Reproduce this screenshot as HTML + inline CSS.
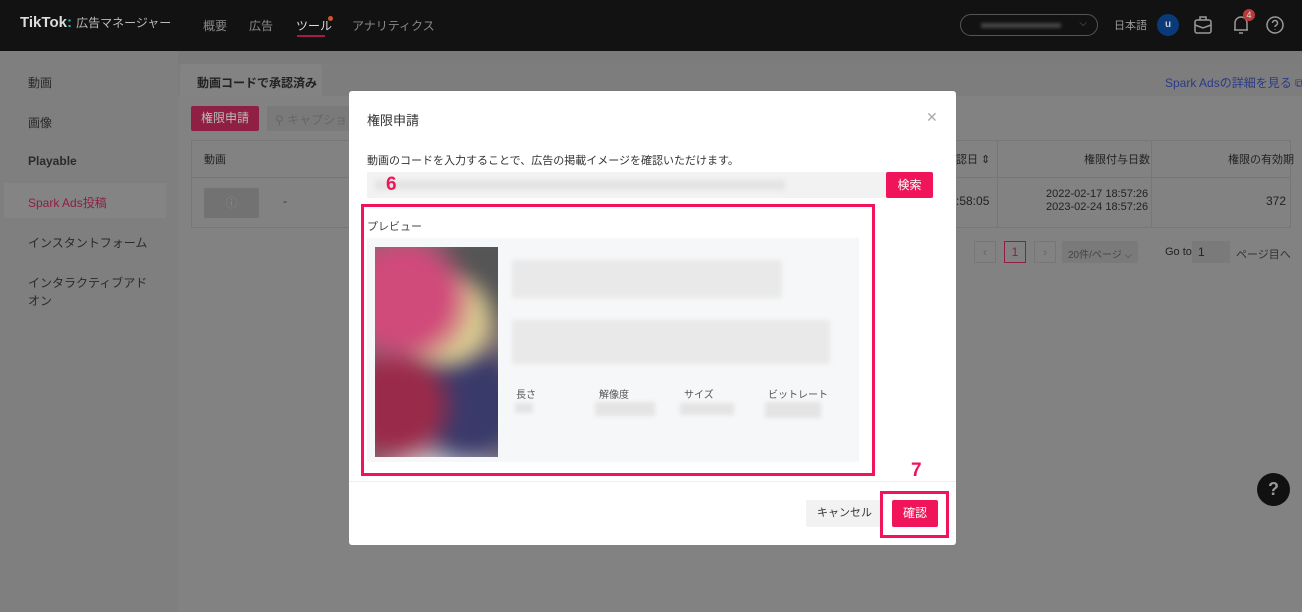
<!DOCTYPE html>
<html><head><meta charset="utf-8"><style>
*{box-sizing:border-box;margin:0;padding:0}
body{width:1302px;height:612px;overflow:hidden;font-family:"Liberation Sans","Noto Sans CJK JP",sans-serif;background:#7b7b7b;position:relative;font-size:12px;color:#222}
.a{position:absolute;white-space:nowrap}
.top{left:0;top:0;width:1302px;height:51px;background:#121212}
.nav{color:#888;font-size:12px}
.side{left:0;top:51px;width:178px;height:561px;background:#7f7f7f}
.si{left:28px;font-size:12px;color:#2a2a2a}
.modal{left:349px;top:91px;width:607px;height:454px;background:#fff;border-radius:3px}
.gray{background:#e4e4e4;filter:blur(2px)}
</style></head><body>
<div class="a top"></div>
<div class="a" style="left:20px;top:14px;color:#ddd;font-weight:bold;font-size:15px">TikTok<span style="color:#2bb">:</span> <span style="font-weight:normal;font-size:12px;color:#bbb">広告マネージャー</span></div>
<div class="a nav" style="left:203px;top:17px">概要</div>
<div class="a nav" style="left:249px;top:17px">広告</div>
<div class="a nav" style="left:296px;top:17px;color:#ddd">ツール</div>
<div class="a" style="left:328px;top:16px;width:5px;height:5px;border-radius:50%;background:#d2532a"></div>
<div class="a" style="left:297px;top:35px;width:28px;height:2px;background:#a01e45"></div>
<div class="a nav" style="left:352px;top:17px">アナリティクス</div>
<div class="a" style="left:960px;top:14px;width:138px;height:22px;border:1px solid #555;border-radius:11px"><div class="a" style="left:20px;top:8px;width:80px;height:5px;background:#444;filter:blur(1.5px)"></div><span class="a" style="right:10px;top:3px;color:#666;font-size:10px">⌵</span></div>
<div class="a" style="left:1114px;top:17px;color:#999;font-size:11px">日本語</div>
<div class="a" style="left:1157px;top:14px;width:22px;height:22px;border-radius:50%;background:#0b3a7a;color:#ccc;font-size:10px;text-align:center;line-height:22px;font-weight:bold">u</div>
<svg class="a" style="left:1193px;top:14px" width="20" height="22" viewBox="0 0 20 22" fill="none" stroke="#999" stroke-width="1.5"><rect x="2" y="6" width="16" height="13" rx="2"/><path d="M7 6V3h6v3M2 11l8 3 8-3"/></svg>
<svg class="a" style="left:1231px;top:12px" width="20" height="24" viewBox="0 0 20 24" fill="none" stroke="#999" stroke-width="1.5"><path d="M4 18V11a6 6 0 0 1 12 0v7H3h14M8 21h4"/></svg>
<div class="a" style="left:1243px;top:9px;width:12px;height:12px;border-radius:50%;background:#b93a3a;color:#ddd;font-size:9px;text-align:center;line-height:12px">4</div>
<svg class="a" style="left:1265px;top:15px" width="20" height="20" viewBox="0 0 20 20" fill="none" stroke="#999" stroke-width="1.5"><circle cx="10" cy="10" r="8"/><path d="M7.5 8a2.5 2.5 0 1 1 3.5 2.3c-.7.4-1 .9-1 1.7M10 14.5v.5"/></svg>

<div class="a side"></div>
<div class="a si" style="top:74px">動画</div>
<div class="a si" style="top:114px">画像</div>
<div class="a si" style="top:154px;font-weight:bold">Playable</div>
<div class="a" style="left:4px;top:183px;width:162px;height:35px;background:#848484"></div>
<div class="a si" style="top:194px;color:#8e1e43">Spark Ads投稿</div>
<div class="a si" style="top:234px">インスタントフォーム</div>
<div class="a si" style="top:274px;line-height:18px">インタラクティブアド<br>オン</div>

<div class="a" style="left:178px;top:63px;width:1124px;height:549px;background:#7d7d7d"></div>
<div class="a" style="left:180px;top:64px;width:142px;height:32px;background:#838383;border-radius:3px 3px 0 0"></div>
<div class="a" style="left:197px;top:74px;font-weight:bold;font-size:12px;color:#222">動画コードで承認済み</div>
<div class="a" style="left:178px;top:96px;width:1124px;height:516px;background:#828282"></div>
<div class="a" style="left:1165px;top:74px;color:#2b3a88;font-size:12px">Spark Adsの詳細を見る ⧉</div>
<div class="a" style="left:191px;top:106px;width:68px;height:25px;background:#8f1f43;border-radius:2px;color:#bbb;text-align:center;line-height:25px">権限申請</div>
<div class="a" style="left:267px;top:106px;width:90px;height:25px;background:#7a7a7a;color:#666;padding:5px 8px;overflow:hidden">⚲ キャプション</div>
<div class="a" style="left:191px;top:140px;width:1100px;height:88px;border:1px solid #777"></div>
<div class="a" style="left:191px;top:177px;width:1100px;height:1px;background:#777"></div>
<div class="a" style="left:204px;top:151px;color:#222;font-size:11px">動画</div>
<div class="a" style="left:204px;top:188px;width:55px;height:30px;background:#727272;border-radius:2px;color:#888;text-align:center;line-height:30px">ⓘ</div>
<div class="a" style="left:283px;top:194px;color:#333">-</div>
<div class="a" style="left:956px;top:151px;color:#222;font-size:11px">認日 ⇕</div>
<div class="a" style="left:997px;top:140px;width:1px;height:88px;background:#777"></div>
<div class="a" style="left:1151px;top:140px;width:1px;height:88px;background:#777"></div>
<div class="a" style="left:1084px;top:151px;color:#222;font-size:11px">権限付与日数</div>
<div class="a" style="left:1228px;top:151px;color:#222;font-size:11px">権限の有効期</div>
<div class="a" style="left:956px;top:194px;color:#222">:58:05</div>
<div class="a" style="left:1046px;top:188px;color:#222;font-size:11px;line-height:13px;text-align:right">2022-02-17 18:57:26<br>2023-02-24 18:57:26</div>
<div class="a" style="left:1266px;top:194px;color:#222">372</div>
<div class="a" style="left:974px;top:241px;width:22px;height:22px;border:1px solid #777;text-align:center;line-height:20px;color:#666">‹</div>
<div class="a" style="left:1004px;top:241px;width:22px;height:22px;border:1px solid #8f1f43;text-align:center;line-height:20px;color:#8f1f43">1</div>
<div class="a" style="left:1034px;top:241px;width:22px;height:22px;border:1px solid #777;text-align:center;line-height:20px;color:#666">›</div>
<div class="a" style="left:1062px;top:241px;width:76px;height:22px;background:#7a7a7a;color:#444;font-size:10px;padding:5px 6px;overflow:hidden">20件/ページ ⌵</div>
<div class="a" style="left:1165px;top:246px;color:#222;font-size:11px">Go to</div>
<div class="a" style="left:1192px;top:241px;width:38px;height:22px;background:#7a7a7a;color:#222;padding:4px 6px">1</div>
<div class="a" style="left:1236px;top:246px;color:#333;font-size:11px">ページ目へ</div>
<div class="a" style="left:1257px;top:473px;width:33px;height:33px;border-radius:50%;background:#111;color:#999;text-align:center;line-height:33px;font-weight:bold;font-size:18px">?</div>

<div class="a modal"></div>
<div class="a" style="left:367px;top:110px;font-size:13px;color:#333">権限申請</div>
<div class="a" style="left:926px;top:109px;font-size:14px;color:#aaa">✕</div>
<div class="a" style="left:367px;top:152px;font-size:11px;color:#333">動画のコードを入力することで、広告の掲載イメージを確認いただけます。</div>
<div class="a" style="left:367px;top:172px;width:520px;height:26px;background:#f2f2f2"></div>
<div class="a gray" style="left:375px;top:180px;width:410px;height:10px"></div>
<div class="a" style="left:386px;top:174px;color:#f0145a;font-weight:bold;font-size:19px">6</div>
<div class="a" style="left:886px;top:172px;width:47px;height:26px;background:#f0145a;border-radius:2px;color:#fff;text-align:center;line-height:26px">検索</div>
<div class="a" style="left:361px;top:204px;width:514px;height:272px;border:3px solid #f0145a"></div>
<div class="a" style="left:367px;top:218px;font-size:11px;color:#444">プレビュー</div>
<div class="a" style="left:367px;top:238px;width:492px;height:224px;background:#f6f7f9"></div>
<div class="a" style="left:375px;top:247px;width:123px;height:210px;overflow:hidden;background:#777">
 <div class="a" style="left:-10px;top:-10px;width:150px;height:240px;filter:blur(7px);background:
 radial-gradient(circle at 25% 25%,#d04a7a 0 20%,transparent 35%),
 radial-gradient(circle at 55% 35%,#d8c890 0 18%,transparent 32%),
 radial-gradient(circle at 80% 15%,#555 0 15%,transparent 30%),
 radial-gradient(circle at 20% 70%,#9a2a4a 0 18%,transparent 32%),
 radial-gradient(circle at 70% 70%,#3a3a6a 0 20%,transparent 35%),
 radial-gradient(circle at 50% 90%,#ccc 0 15%,transparent 30%),#7a6a70"></div>
</div>
<div class="a gray" style="left:512px;top:260px;width:270px;height:38px;background:#e9e9e9"></div>
<div class="a gray" style="left:512px;top:320px;width:318px;height:44px;background:#e9e9e9"></div>
<div class="a" style="left:516px;top:386px;font-size:10px;color:#555">長さ</div>
<div class="a" style="left:599px;top:386px;font-size:10px;color:#555">解像度</div>
<div class="a" style="left:684px;top:386px;font-size:10px;color:#555">サイズ</div>
<div class="a" style="left:768px;top:386px;font-size:10px;color:#555">ビットレート</div>
<div class="a gray" style="left:515px;top:403px;width:18px;height:10px"></div>
<div class="a gray" style="left:595px;top:402px;width:60px;height:14px"></div>
<div class="a gray" style="left:680px;top:403px;width:54px;height:12px"></div>
<div class="a gray" style="left:765px;top:402px;width:56px;height:16px"></div>
<div class="a" style="left:349px;top:481px;width:607px;height:1px;background:#eee"></div>
<div class="a" style="left:911px;top:460px;color:#f0145a;font-weight:bold;font-size:19px">7</div>
<div class="a" style="left:806px;top:500px;width:77px;height:27px;background:#f2f2f2;border-radius:2px;color:#333;text-align:center;line-height:27px;font-size:11px">キャンセル</div>
<div class="a" style="left:880px;top:491px;width:69px;height:47px;border:3px solid #f0145a"></div>
<div class="a" style="left:892px;top:500px;width:46px;height:27px;background:#f0145a;border-radius:2px;color:#fff;text-align:center;line-height:27px">確認</div>
</body></html>
